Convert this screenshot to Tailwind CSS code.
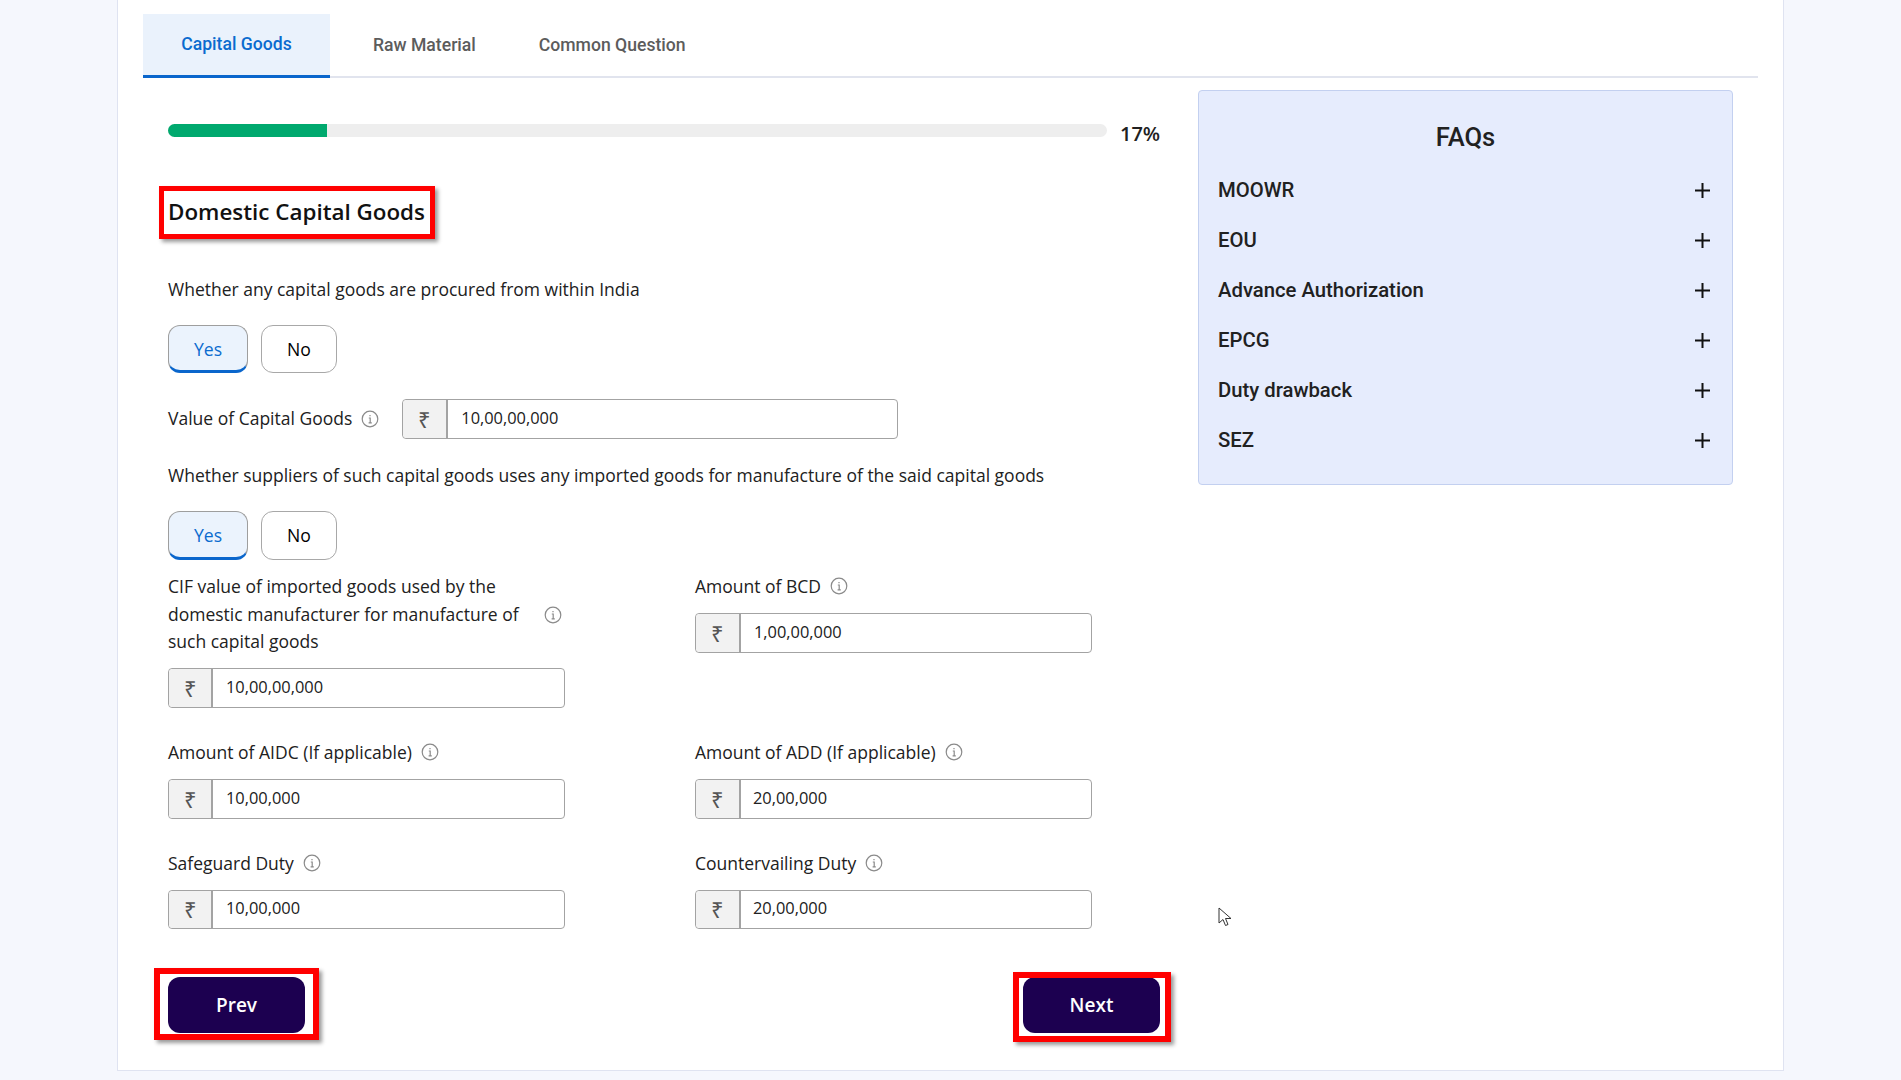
<!DOCTYPE html>
<html lang="en">
<head>
    <meta charset="UTF-8">
    <meta name="viewport" content="width=device-width, initial-scale=1.0">
    <title>Domestic Capital Goods</title>
    <script src="https://cdn.jsdelivr.net/npm/@tailwindcss/browser@4"></script>
</head>
<body class="relative h-[1080px] overflow-hidden bg-[#f5f7fd] font-['Open_Sans',sans-serif] text-[#212121]">
    <div class="ml-[117px] h-[1071px] w-[1667px] border-x border-b border-[#dfe3f1] bg-white px-[25px] pt-[14px]">
        <!-- tabs -->
        <div class="flex h-[64px] border-b-2 border-[#e1e4ee] font-['Roboto',sans-serif] text-[17.6px] font-medium text-[#5c5c5c]">
            <div class="-mb-[2px] flex h-[64px] w-[187px] items-center justify-center border-b-[3px] border-[#0a66cc] bg-[#eaf2fc] text-[#0a6bcf]">Capital Goods</div>
            <div class="ml-[43px] flex items-center">Raw Material</div>
            <div class="ml-[63px] flex items-center">Common Question</div>
        </div>

        <div class="grid grid-cols-[1055px_535px]">
            <div class="pl-[25px]">
                <!-- progress -->
                <div class="mt-[46px] flex h-[13px] items-center">
                    <div class="h-[13px] w-[939px] overflow-hidden rounded-full bg-[#eeeeee]">
                        <div class="h-full bg-[#00a96e]" style="width: 16.9%"></div>
                    </div>
                    <span class="mt-[6px] ml-[13px] text-[20px] font-semibold">17%</span>
                </div>

                <h1 class="mt-[59px] text-[22.4px] leading-[32px] font-semibold text-[#111111]">Domestic Capital Goods</h1>
                <p class="mt-[47px] text-[17.5px] leading-[28px]">Whether any capital goods are procured from within India</p>

                <div class="mt-[22px] flex gap-[13px] text-[17.6px]">
                    <button class="h-[48px] w-[80px] rounded-[12px] border border-b-[3px] border-[#9e9e9e] border-b-[#0a66cc] bg-[#ebf3fd] pt-[2px] text-[#0a6bcf]">Yes</button>
                    <button class="h-[48px] w-[76px] rounded-[12px] border border-[#a8a8a8] font-medium text-black">No</button>
                </div>

                <div class="mt-[26px] flex h-[40px] items-center">
                    <span class="-mt-[2px] text-[17.5px]">Value of Capital Goods</span>
                    <svg class="ml-[9px] h-[18px] w-[18px] text-[#8a8a8a]" viewBox="0 0 18 18" fill="none" stroke="currentColor" stroke-width="1.2"><circle cx="9" cy="9" r="7.8"/><path d="M7.8 8h1.4v4.8M7.6 12.9h3.2M9 5v1.3"/></svg>
                    <div class="ml-[23px] flex h-[40px] w-[496px] rounded-[4px] border border-[#a3a3a3] text-[16.4px]">
                        <div class="flex w-[45px] items-center justify-center rounded-l-[4px] border-r-2 border-[#a3a3a3] bg-[#f2f2f2] text-[22px] text-[#555555]">₹</div>
                        <div class="-mt-[2px] flex items-center pl-[13px]">10,00,00,000</div>
                    </div>
                </div>

                <p class="mt-[22px] text-[17.5px] leading-[28px]">Whether suppliers of such capital goods uses any imported goods for manufacture of the said capital goods</p>

                <div class="mt-[22px] flex gap-[13px] text-[17.6px]">
                    <button class="h-[49px] w-[80px] rounded-[12px] border border-b-[3px] border-[#9e9e9e] border-b-[#0a66cc] bg-[#ebf3fd] pt-[2px] text-[#0a6bcf]">Yes</button>
                    <button class="h-[49px] w-[76px] rounded-[12px] border border-[#a8a8a8] font-medium text-black">No</button>
                </div>

                <div class="mt-[13px] grid w-[924px] grid-cols-[397px_397px] gap-x-[130px] gap-y-[31px] text-[17.5px]">
                    <div class="flex flex-col gap-[12px]">
                        <div class="flex items-center">
                            <span class="w-[356px] leading-[27.7px]">CIF value of imported goods used by the domestic manufacturer for manufacture of such capital goods</span>
                            <svg class="ml-[20px] h-[18px] w-[18px] text-[#8a8a8a]" viewBox="0 0 18 18" fill="none" stroke="currentColor" stroke-width="1.2"><circle cx="9" cy="9" r="7.8"/><path d="M7.8 8h1.4v4.8M7.6 12.9h3.2M9 5v1.3"/></svg>
                        </div>
                        <div class="flex h-[40px] rounded-[4px] border border-[#a3a3a3] text-[16.4px]">
                            <div class="flex w-[44px] items-center justify-center rounded-l-[4px] border-r-2 border-[#a3a3a3] bg-[#f2f2f2] text-[22px] text-[#555555]">₹</div>
                            <div class="-mt-[2px] flex items-center pl-[13px]">10,00,00,000</div>
                        </div>
                    </div>
                    <div class="flex flex-col gap-[12px]">
                        <div class="flex h-[28px] items-center pb-[2px]">
                            <span>Amount of BCD</span>
                            <svg class="ml-[9px] h-[18px] w-[18px] text-[#8a8a8a]" viewBox="0 0 18 18" fill="none" stroke="currentColor" stroke-width="1.2"><circle cx="9" cy="9" r="7.8"/><path d="M7.8 8h1.4v4.8M7.6 12.9h3.2M9 5v1.3"/></svg>
                        </div>
                        <div class="flex h-[40px] rounded-[4px] border border-[#a3a3a3] text-[16.4px]">
                            <div class="flex w-[45px] items-center justify-center rounded-l-[4px] border-r-2 border-[#a3a3a3] bg-[#f2f2f2] text-[22px] text-[#555555]">₹</div>
                            <div class="-mt-[2px] flex items-center pl-[13px]">1,00,00,000</div>
                        </div>
                    </div>
                    <div class="flex flex-col gap-[12px]">
                        <div class="flex h-[28px] items-center pb-[2px]">
                            <span>Amount of AIDC (If applicable)</span>
                            <svg class="ml-[9px] h-[18px] w-[18px] text-[#8a8a8a]" viewBox="0 0 18 18" fill="none" stroke="currentColor" stroke-width="1.2"><circle cx="9" cy="9" r="7.8"/><path d="M7.8 8h1.4v4.8M7.6 12.9h3.2M9 5v1.3"/></svg>
                        </div>
                        <div class="flex h-[40px] rounded-[4px] border border-[#a3a3a3] text-[16.4px]">
                            <div class="flex w-[44px] items-center justify-center rounded-l-[4px] border-r-2 border-[#a3a3a3] bg-[#f2f2f2] text-[22px] text-[#555555]">₹</div>
                            <div class="-mt-[2px] flex items-center pl-[13px]">10,00,000</div>
                        </div>
                    </div>
                    <div class="flex flex-col gap-[12px]">
                        <div class="flex h-[28px] items-center pb-[2px]">
                            <span>Amount of ADD (If applicable)</span>
                            <svg class="ml-[9px] h-[18px] w-[18px] text-[#8a8a8a]" viewBox="0 0 18 18" fill="none" stroke="currentColor" stroke-width="1.2"><circle cx="9" cy="9" r="7.8"/><path d="M7.8 8h1.4v4.8M7.6 12.9h3.2M9 5v1.3"/></svg>
                        </div>
                        <div class="flex h-[40px] rounded-[4px] border border-[#a3a3a3] text-[16.4px]">
                            <div class="flex w-[45px] items-center justify-center rounded-l-[4px] border-r-2 border-[#a3a3a3] bg-[#f2f2f2] text-[22px] text-[#555555]">₹</div>
                            <div class="-mt-[2px] flex items-center pl-[12px]">20,00,000</div>
                        </div>
                    </div>
                    <div class="-mt-[1px] flex flex-col gap-[12px]">
                        <div class="flex h-[29px] items-center pb-[1px]">
                            <span>Safeguard Duty</span>
                            <svg class="ml-[9px] h-[18px] w-[18px] text-[#8a8a8a]" viewBox="0 0 18 18" fill="none" stroke="currentColor" stroke-width="1.2"><circle cx="9" cy="9" r="7.8"/><path d="M7.8 8h1.4v4.8M7.6 12.9h3.2M9 5v1.3"/></svg>
                        </div>
                        <div class="flex h-[39px] rounded-[4px] border border-[#a3a3a3] text-[16.4px]">
                            <div class="flex w-[44px] items-center justify-center rounded-l-[4px] border-r-2 border-[#a3a3a3] bg-[#f2f2f2] text-[22px] text-[#555555]">₹</div>
                            <div class="-mt-[2px] flex items-center pl-[13px]">10,00,000</div>
                        </div>
                    </div>
                    <div class="-mt-[1px] flex flex-col gap-[12px]">
                        <div class="flex h-[29px] items-center pb-[1px]">
                            <span>Countervailing Duty</span>
                            <svg class="ml-[9px] h-[18px] w-[18px] text-[#8a8a8a]" viewBox="0 0 18 18" fill="none" stroke="currentColor" stroke-width="1.2"><circle cx="9" cy="9" r="7.8"/><path d="M7.8 8h1.4v4.8M7.6 12.9h3.2M9 5v1.3"/></svg>
                        </div>
                        <div class="flex h-[39px] rounded-[4px] border border-[#a3a3a3] text-[16.4px]">
                            <div class="flex w-[45px] items-center justify-center rounded-l-[4px] border-r-2 border-[#a3a3a3] bg-[#f2f2f2] text-[22px] text-[#555555]">₹</div>
                            <div class="-mt-[2px] flex items-center pl-[12px]">20,00,000</div>
                        </div>
                    </div>
                </div>

                <div class="mt-[48px] flex w-[992px] justify-between text-[19px] font-semibold text-white">
                    <button class="h-[56px] w-[137px] rounded-[12px] bg-[#1c0050]">Prev</button>
                    <button class="h-[56px] w-[137px] rounded-[12px] bg-[#1c0050]">Next</button>
                </div>
            </div>

            <!-- FAQs -->
            <aside class="mt-[12px] h-[395px] rounded-[4px] border border-[#c3d0f0] bg-[#e6ecfd] pt-[30px] font-['Roboto',sans-serif] text-[#212121]">
                <h2 class="text-center text-[25.6px] leading-[32px] font-medium">FAQs</h2>
                <ul class="mt-[12px] px-[19px] text-[20.3px] font-medium">
                    <li class="flex h-[50px] items-center justify-between pr-[3px]">MOOWR<svg class="h-[15px] w-[15px]" viewBox="0 0 15 15" stroke="#111111" stroke-width="2"><path d="M7.5 0v15M0 7.5h15"/></svg></li>
                    <li class="flex h-[50px] items-center justify-between pr-[3px]">EOU<svg class="h-[15px] w-[15px]" viewBox="0 0 15 15" stroke="#111111" stroke-width="2"><path d="M7.5 0v15M0 7.5h15"/></svg></li>
                    <li class="flex h-[50px] items-center justify-between pr-[3px]">Advance Authorization<svg class="h-[15px] w-[15px]" viewBox="0 0 15 15" stroke="#111111" stroke-width="2"><path d="M7.5 0v15M0 7.5h15"/></svg></li>
                    <li class="flex h-[50px] items-center justify-between pr-[3px]">EPCG<svg class="h-[15px] w-[15px]" viewBox="0 0 15 15" stroke="#111111" stroke-width="2"><path d="M7.5 0v15M0 7.5h15"/></svg></li>
                    <li class="flex h-[50px] items-center justify-between pr-[3px]">Duty drawback<svg class="h-[15px] w-[15px]" viewBox="0 0 15 15" stroke="#111111" stroke-width="2"><path d="M7.5 0v15M0 7.5h15"/></svg></li>
                    <li class="flex h-[50px] items-center justify-between pr-[3px]">SEZ<svg class="h-[15px] w-[15px]" viewBox="0 0 15 15" stroke="#111111" stroke-width="2"><path d="M7.5 0v15M0 7.5h15"/></svg></li>
                </ul>
            </aside>
        </div>
    </div>

    <!-- red annotation boxes drawn over the screenshot -->
    <div class="absolute top-[186px] left-[159px] h-[53px] w-[276px] border-[5px] border-[#ff0000] shadow-[3px_3px_4px_rgba(0,0,0,0.4)]"></div>
    <div class="absolute top-[968px] left-[154px] h-[72px] w-[165px] border-[6px] border-[#ff0000] shadow-[3px_3px_4px_rgba(0,0,0,0.4)]"></div>
    <div class="absolute top-[972px] left-[1013px] h-[70px] w-[158px] border-[6px] border-[#ff0000] shadow-[3px_3px_4px_rgba(0,0,0,0.4)]"></div>

    <!-- mouse cursor -->
    <svg class="absolute top-[907px] left-[1218px] h-[21px] w-[14px]" viewBox="0 0 14 21" fill="#ffffff" stroke="#333333"><path d="M1 1v15l4-3.5 2.5 6 2.5-1-2.5-6h5.5z"/></svg>
</body>
</html>
